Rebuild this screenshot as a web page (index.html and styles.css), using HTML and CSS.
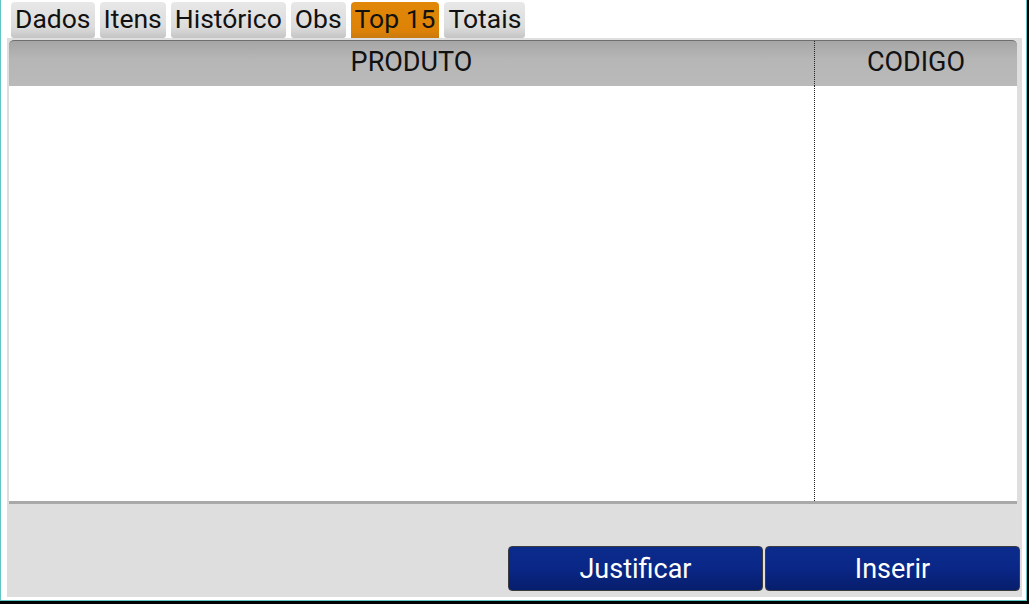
FILE: index.html
```html
<!DOCTYPE html>
<html lang="pt">

<head>
    <meta charset="UTF-8">
    <meta name="viewport" content="width=device-width, initial-scale=1.0">
    <title>Top 15</title>
    <link rel="stylesheet" href="styles.css">
</head>

<body>
    <div class="screen">
        <nav class="tabs">
            <div class="tab">Dados</div>
            <div class="tab">Itens</div>
            <div class="tab">Histórico</div>
            <div class="tab">Obs</div>
            <div class="tab active">Top 15</div>
            <div class="tab">Totais</div>
        </nav>

        <div class="panel">
            <div class="grid">
                <div class="grid-head">
                    <div class="col col-prod">PRODUTO</div>
                    <div class="col col-cod">CODIGO</div>
                </div>
                <div class="grid-body">
                    <div class="col col-prod"></div>
                    <div class="col col-cod"></div>
                </div>
            </div>

            <div class="actions">
                <button class="btn">Justificar</button>
                <button class="btn">Inserir</button>
            </div>
        </div>
    </div>
</body>

</html>
```

FILE: styles.css
```css
* {
    margin: 0;
    padding: 0;
    box-sizing: border-box;
}

body {
    width: 1029px;
    height: 604px;
    background: #000000;
    font-family: Roboto, 'Noto Sans', sans-serif;
    overflow: hidden;
}

.screen {
    width: 1027px;
    height: 601px;
    background: #ffffff;
    border: 1px solid #5fc6c4;
    border-top: none;
    display: flex;
    flex-direction: column;
}

.tabs {
    display: flex;
    gap: 5px;
    padding: 2px 0 0 10px;
    height: 38px;
}

.tab {
    height: 36px;
    padding: 0 4px;
    font-size: 26.5px;
    line-height: 34px;
    color: #111111;
    background: linear-gradient(#e8e8e8, #dcdcdc 70%, #c4c4c4);
    border-radius: 4px 4px 3px 3px;
}

.tab.active {
    background: linear-gradient(#e08708, #dd8206 80%, #c97a10);
    border-radius: 4px 4px 0 0;
}

.panel {
    flex: 1;
    margin: 0 4px 3px 6px;
    background: #dedede;
    display: flex;
    flex-direction: column;
    padding: 2px 5px 6px 2px;
}

.grid {
    height: 461px;
    background: #ffffff;
    display: flex;
    flex-direction: column;
    border-radius: 5px 5px 0 0;
    box-shadow: 0 3px 0 #a9a9a9;
}

.grid-head {
    height: 46px;
    display: flex;
    background: linear-gradient(#a6a6a6, #b6b6b6 40%, #bababa);
    border-top: 1px solid #6e6e6e;
    border-radius: 5px 5px 0 0;
}

.grid-body {
    flex: 1;
    display: flex;
}

.col {
    font-size: 27px;
    color: #111111;
    text-align: center;
    line-height: 43px;
}

.col-prod {
    width: 806px;
    border-right: 1px dotted #222222;
}

.col-cod {
    flex: 1;
}

.actions {
    margin-top: auto;
    display: flex;
    justify-content: flex-end;
    gap: 2px;
    margin-right: -3px;
}

.btn {
    width: 255px;
    height: 45px;
    border: 1px solid #3c3c3c;
    border-radius: 4px;
    background: linear-gradient(#0b2b8c, #0a2787 50%, #071e6c);
    color: #ffffff;
    font-family: Roboto, 'Noto Sans', sans-serif;
    font-size: 27px;
    cursor: pointer;
}
```
